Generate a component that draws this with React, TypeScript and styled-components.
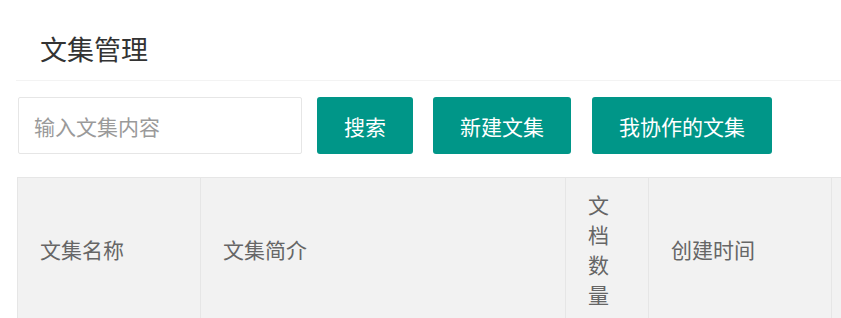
import React from "react";
import styled, { createGlobalStyle } from "styled-components";

const Global = createGlobalStyle`
  html, body {
    margin: 0;
    padding: 0;
    overflow: hidden;
    background: #ffffff;
  }
  body {
    font-family: "Noto Sans CJK SC", "Noto Sans", "Liberation Sans", sans-serif;
    color: #333;
  }
`;

const Page = styled.div`
  padding: 17px 0 0 16px;
  width: 1400px;
`;

const CardHeader = styled.div`
  height: 63px;
  line-height: 63px;
  padding-left: 24px;
  border-bottom: 1px solid #f3f3f3;
  font-size: 27px;
  color: #333;
`;

const Toolbar = styled.div`
  display: flex;
  align-items: center;
  padding: 16px 0 0 2px;
`;

const SearchInput = styled.input`
  box-sizing: border-box;
  width: 284px;
  height: 57px;
  padding: 0 15px;
  border: 1px solid #e6e6e6;
  border-radius: 2px;
  font-family: inherit;
  font-size: 21px;
  color: #333;
  outline: none;
  &::placeholder {
    color: #9a9a9a;
  }
`;

const Button = styled.button<{ $gap: number }>`
  box-sizing: border-box;
  height: 57px;
  margin-left: ${(p) => p.$gap}px;
  padding: 0 27px;
  border: none;
  border-radius: 3px;
  background: #009688;
  color: #fff;
  font-family: inherit;
  font-size: 21px;
  white-space: nowrap;
  cursor: pointer;
`;

const Table = styled.table`
  margin: 23px 0 0 1px;
  border-collapse: collapse;
  table-layout: fixed;
  width: 1300px;
`;

const Th = styled.th<{ $w: number }>`
  width: ${(p) => p.$w}px;
  padding: 11px 22px 13px;
  background: #f2f2f2;
  border: 1px solid #e6e6e6;
  font-weight: normal;
  font-size: 21px;
  line-height: 30px;
  color: #666;
  text-align: left;
  vertical-align: middle;
  box-sizing: border-box;
`;

const columns: { key: string; label: string; w: number }[] = [
  { key: "name", label: "文集名称", w: 183 },
  { key: "intro", label: "文集简介", w: 365 },
  { key: "count", label: "文档数量", w: 83 },
  { key: "time", label: "创建时间", w: 183 },
  { key: "ops", label: "", w: 486 },
];

export default function App() {
  return (
    <>
      <Global />
      <Page>
        <CardHeader>文集管理</CardHeader>
        <Toolbar>
          <SearchInput placeholder="输入文集内容" />
          <Button $gap={15}>搜索</Button>
          <Button $gap={20}>新建文集</Button>
          <Button $gap={21}>我协作的文集</Button>
        </Toolbar>
        <Table>
          <thead>
            <tr>
              {columns.map((c) => (
                <Th key={c.key} $w={c.w}>
                  {c.label}
                </Th>
              ))}
            </tr>
          </thead>
        </Table>
      </Page>
    </>
  );
}
